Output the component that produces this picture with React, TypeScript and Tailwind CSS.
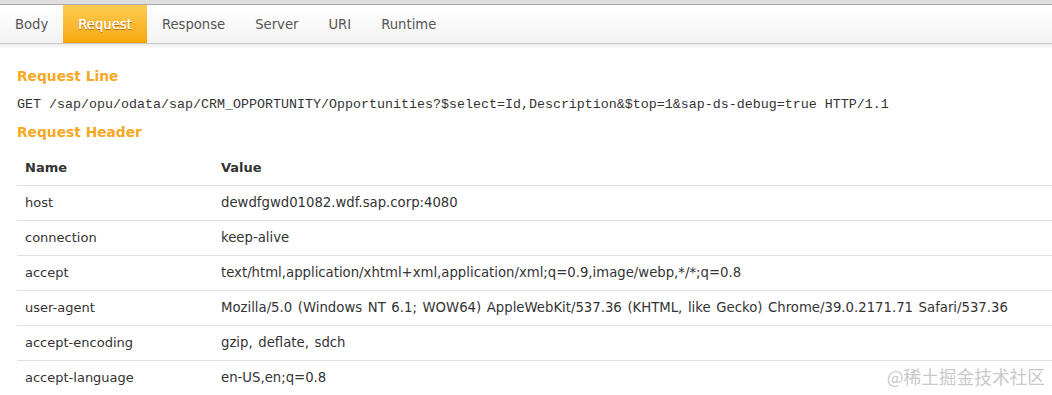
import React from 'react';

const tabs = ['Body', 'Request', 'Response', 'Server', 'URI', 'Runtime'];

const headers: [string, string][] = [
  ['host', 'dewdfgwd01082.wdf.sap.corp:4080'],
  ['connection', 'keep-alive'],
  ['accept', 'text/html,application/xhtml+xml,application/xml;q=0.9,image/webp,*/*;q=0.8'],
  [
    'user-agent',
    'Mozilla/5.0 (Windows NT 6.1; WOW64) AppleWebKit/537.36 (KHTML, like Gecko) Chrome/39.0.2171.71 Safari/537.36',
  ],
  ['accept-encoding', 'gzip, deflate, sdch'],
  ['accept-language', 'en-US,en;q=0.8'],
];

export default function App() {
  return (
    <div className="relative w-[1052px] h-[395px] overflow-hidden bg-white font-['DejaVu_Sans',Verdana,sans-serif] text-[13px] text-[#333]">
      {/* tab strip */}
      <div className="h-[4px] bg-[#dedede]" />
      <div className="border-t border-[#a9a9a9] border-b border-b-[#c6c6c6] bg-gradient-to-b from-white to-[#f3f3f3] flex h-[40px] text-[13.2px]">
        {tabs.map((t) =>
          t === 'Request' ? (
            <div
              key={t}
              className="flex items-center px-[15px] pt-[1px] bg-gradient-to-b from-[#fdcb4f] to-[#f9a700] text-white [text-shadow:0_0_0.6px_#fff,0_1px_1px_rgba(160,90,0,0.9)]"
            >
              {t}
            </div>
          ) : (
            <div key={t} className="flex items-center px-[15px] pt-[1px] text-[#555]">
              {t}
            </div>
          )
        )}
      </div>
      <div className="h-[5px] bg-gradient-to-b from-[#ececec] to-white" />

      <div className="pl-[17px]">
        <h2 className="mt-[17px] text-[13.8px] font-bold text-[#f7a823] leading-[20px]">Request Line</h2>
        <div className="mt-[11px] font-['Liberation_Mono','Courier_New',monospace] text-[13.33px] leading-[16px] text-[#333]">
          GET /sap/opu/odata/sap/CRM_OPPORTUNITY/Opportunities?$select=Id,Description&amp;$top=1&amp;sap-ds-debug=true HTTP/1.1
        </div>
        <h2 className="mt-[9px] text-[13.8px] font-bold text-[#f7a823] leading-[20px]">Request Header</h2>

        <table className="mt-[8px] w-[1035px] border-collapse">
          <thead>
            <tr className="h-[35px] border-b border-[#e2e2e2]">
              <th className="w-[204px] pl-[8px] text-left font-bold text-[#333]">Name</th>
              <th className="text-left font-bold text-[#333]">Value</th>
            </tr>
          </thead>
          <tbody>
            {headers.map(([k, v]) => (
              <tr key={k} className="h-[35px] border-b border-[#e2e2e2]">
                <td className="pl-[8px] whitespace-nowrap">{k}</td>
                <td className="whitespace-nowrap text-[13.25px] [word-spacing:1.4px]">{v}</td>
              </tr>
            ))}
          </tbody>
        </table>
      </div>

      <div className="absolute right-[7px] bottom-[5px] text-[17.7px] text-[#c9c9c9] font-['Noto_Sans_CJK_SC',sans-serif]">
        @稀土掘金技术社区
      </div>
    </div>
  );
}
